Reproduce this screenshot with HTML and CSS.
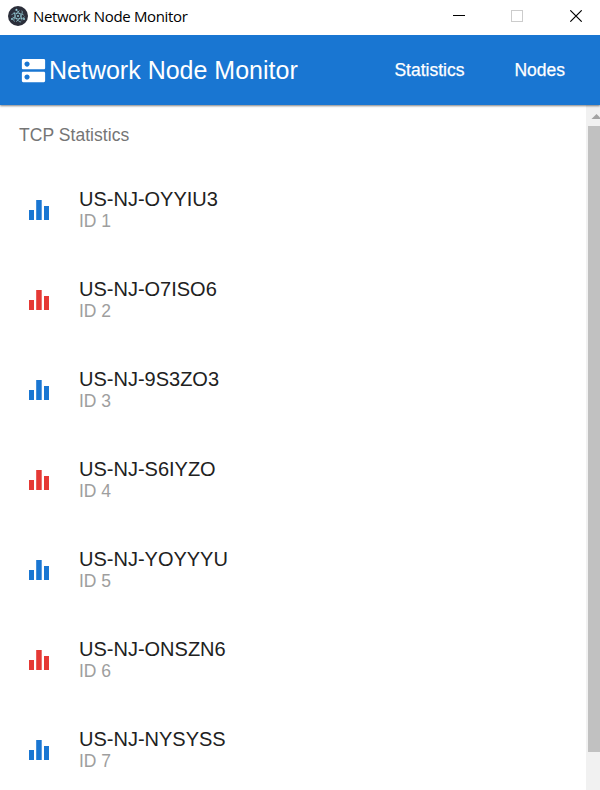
FILE: index.html
```html
<!DOCTYPE html>
<html lang="en">
<head>
<meta charset="utf-8">
<title>Network Node Monitor</title>
<link rel="stylesheet" href="styles.css">
</head>
<body>
<div class="window">
  <div class="titlebar">
    <svg class="app-icon" viewBox="0 0 20 20">
      <circle cx="10" cy="10" r="10" fill="#2b2e3a"/>
      <g fill="none" stroke="#9fdbe6" stroke-opacity=".75" stroke-width=".8">
        <ellipse cx="10" cy="10" rx="6.600" ry="2.700" stroke-dasharray="13 2.500" transform="rotate(5 10 10)"/>
        <ellipse cx="10" cy="10" rx="6.600" ry="2.700" stroke-dasharray="13 2.500" transform="rotate(62 10 10)"/>
        <ellipse cx="10" cy="10" rx="6.600" ry="2.700" stroke-dasharray="13 2.500" transform="rotate(122 10 10)"/>
      </g>
      <g fill="#9fdbe6"><circle cx="10" cy="10" r=".9"/><circle cx="4" cy="13" r=".9"/><circle cx="16" cy="13" r=".9"/><circle cx="8.500" cy="3.600" r=".9"/></g>
    </svg>
    <span class="window-title">Network Node Monitor</span>
    <svg class="controls" viewBox="0 0 130 12" fill="none">
      <path d="M0 5.5H12" stroke="#000"/>
      <rect x="58.5" y=".5" width="11" height="11" stroke="#ccc"/>
      <path d="M117.3 .3l11.4 11.4M128.7 .3l-11.4 11.4" stroke="#000" stroke-width="1.1"/>
    </svg>
  </div>
  <header class="appbar">
    <svg class="brand-icon" viewBox="0 0 24 24"><path fill="#fff" d="M20 13H4c-.55 0-1 .45-1 1v6c0 .55.45 1 1 1h16c.55 0 1-.45 1-1v-6c0-.55-.45-1-1-1zM7 19c-1.100 0-2-.9-2-2s.9-2 2-2 2 .9 2 2-.9 2-2 2zM20 3H4c-.55 0-1 .45-1 1v6c0 .55.45 1 1 1h16c.55 0 1-.45 1-1V4c0-.55-.45-1-1-1zM7 9c-1.100 0-2-.9-2-2s.9-2 2-2 2 .9 2 2-.9 2-2 2z"/></svg>
    <h1 class="brand">Network Node Monitor</h1>
    <nav class="nav"><a>Statistics</a><a>Nodes</a></nav>
  </header>
  <div class="content">
    <main class="list">
      <h2 class="subheader">TCP Statistics</h2>
      <div class="item"><svg class="bars" viewBox="0 0 20 20"><path d="M0 10h5v10H0zM7.200 0h5.500v20H7.200zM15 6h5v14h-5z"/></svg><div><div class="name">US-NJ-OYYIU3</div><div class="id">ID 1</div></div></div>
      <div class="item"><svg class="bars red" viewBox="0 0 20 20"><path d="M0 10h5v10H0zM7.200 0h5.500v20H7.200zM15 6h5v14h-5z"/></svg><div><div class="name">US-NJ-O7ISO6</div><div class="id">ID 2</div></div></div>
      <div class="item"><svg class="bars" viewBox="0 0 20 20"><path d="M0 10h5v10H0zM7.200 0h5.500v20H7.200zM15 6h5v14h-5z"/></svg><div><div class="name">US-NJ-9S3ZO3</div><div class="id">ID 3</div></div></div>
      <div class="item"><svg class="bars red" viewBox="0 0 20 20"><path d="M0 10h5v10H0zM7.200 0h5.500v20H7.200zM15 6h5v14h-5z"/></svg><div><div class="name">US-NJ-S6IYZO</div><div class="id">ID 4</div></div></div>
      <div class="item"><svg class="bars" viewBox="0 0 20 20"><path d="M0 10h5v10H0zM7.200 0h5.500v20H7.200zM15 6h5v14h-5z"/></svg><div><div class="name">US-NJ-YOYYYU</div><div class="id">ID 5</div></div></div>
      <div class="item"><svg class="bars red" viewBox="0 0 20 20"><path d="M0 10h5v10H0zM7.200 0h5.500v20H7.200zM15 6h5v14h-5z"/></svg><div><div class="name">US-NJ-ONSZN6</div><div class="id">ID 6</div></div></div>
      <div class="item"><svg class="bars" viewBox="0 0 20 20"><path d="M0 10h5v10H0zM7.200 0h5.500v20H7.200zM15 6h5v14h-5z"/></svg><div><div class="name">US-NJ-NYSYSS</div><div class="id">ID 7</div></div></div>
    </main>
    <div class="scrollbar">
      <svg class="arrow" viewBox="0 0 14 21"><path fill="#a3a3a3" d="M5.500 14L10.500 9L15.500 14z"/></svg>
      <div class="thumb"></div>
    </div>
  </div>
</div>
</body>
</html>
```

FILE: styles.css
```css
* { box-sizing: border-box; }
body { margin: 0; font-family: "Liberation Sans", Arial, sans-serif; background: #fff; }
.window { width: 600px; height: 790px; display: flex; flex-direction: column; overflow: hidden; }
.titlebar { position: relative; z-index: 2; height: 35px; flex: none; display: flex; align-items: center; padding: 0 17px 3px 8px; background: #fff; }
.app-icon { width: 20px; height: 20px; }
.window-title { margin-left: 5px; font: 15px/20px "Open Sans", sans-serif; letter-spacing: -0.35px; color: #000; white-space: nowrap; }
.controls { width: 130px; height: 12px; margin-left: auto; }
.appbar { height: 70px; flex: none; display: flex; align-items: center; padding: 0 35px 0 18px; background: #1976d2; color: #fff; box-shadow: 0 1px 2px rgba(0, 0, 0, .5); z-index: 1; }
.brand-icon { width: 31px; height: 31px; }
.brand { margin: 0; font-size: 25px; line-height: 30px; font-weight: 400; white-space: nowrap; }
.nav { margin-left: auto; display: flex; gap: 50px; font-size: 17.5px; line-height: 20px; -webkit-text-stroke: .25px #fff; }
.content { flex: 1; display: flex; min-height: 0; }
.list { flex: 1; overflow: hidden; }
.subheader { margin: 0; padding: 0 19px; font-size: 17.5px; line-height: 60px; font-weight: 400; letter-spacing: .05px; color: #757575; }
.item { height: 90px; display: flex; align-items: center; padding-left: 29px; }
.bars { width: 20px; height: 20px; margin-right: 30px; fill: #1976d2; }
.bars.red { fill: #e53935; }
.name { font-size: 20px; line-height: 22px; color: #212121; }
.id { font-size: 17.5px; line-height: 22px; color: #9e9e9e; }
.scrollbar { width: 14px; background: #f1f1f1; }
.arrow { display: block; width: 14px; height: 21px; }
.thumb { height: 626px; margin-left: 2px; background: #c1c1c1; }
```
